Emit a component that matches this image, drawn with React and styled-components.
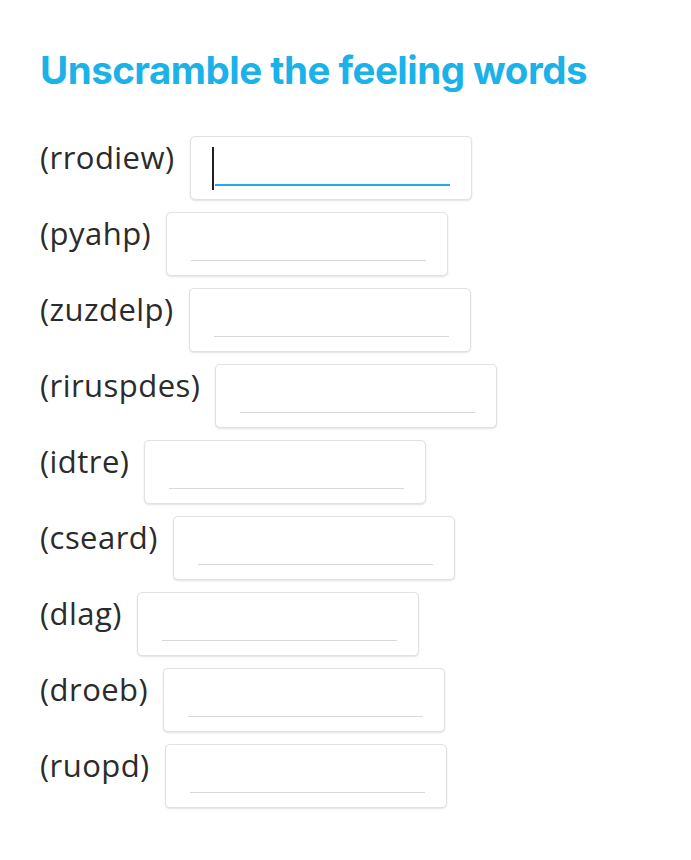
import React from 'react';
import styled, { createGlobalStyle } from 'styled-components';

const GlobalStyle = createGlobalStyle`
  body {
    margin: 0;
    background: #fff;
    font-family: "Open Sans", "Liberation Sans", sans-serif;
  }
`;

const Page = styled.div`
  width: 691px;
  height: 860px;
  padding: 44px 0 0 40px;
  box-sizing: border-box;
`;

const Title = styled.h1`
  margin: 0 0 40px;
  font-family: Inter, "Open Sans", sans-serif;
  font-weight: 700;
  font-size: 38.5px;
  letter-spacing: -0.5px;
  line-height: 52px;
  color: #1bb1e9;
`;

const List = styled.div`
  display: flex;
  flex-direction: column;
  gap: 12px;
`;

const Row = styled.div`
  display: flex;
  align-items: flex-start;
  gap: 15px;
`;

const Label = styled.span`
  font-family: "Open Sans", sans-serif;
  font-size: 31px;
  letter-spacing: 0.45px;
  line-height: 42px;
  color: #2b2b2b;
`;

const Box = styled.div`
  position: relative;
  width: 282px;
  height: 64px;
  box-sizing: border-box;
  border: 1px solid #e2e2dc;
  border-radius: 5px;
  background: #fff;
  box-shadow: 0 1px 2px rgba(0, 0, 0, 0.12);
`;

const Line = styled.div`
  position: absolute;
  left: 24px;
  right: 21px;
  top: 47px;
  height: ${p => (p.$active ? '2px' : '1px')};
  background: ${p => (p.$active ? '#1eaee4' : '#d8d8d4')};
`;

const Caret = styled.div`
  position: absolute;
  left: 21px;
  top: 10px;
  width: 2px;
  height: 43px;
  background: #222;
`;

const words = ['rrodiew', 'pyahp', 'zuzdelp', 'riruspdes', 'idtre', 'cseard', 'dlag', 'droeb', 'ruopd'];

export default function App() {
  return (
    <Page>
      <GlobalStyle />
      <Title>Unscramble the feeling words</Title>
      <List>
        {words.map((w, i) => (
          <Row key={w}>
            <Label>({w})</Label>
            <Box>
              {i === 0 && <Caret />}
              <Line $active={i === 0} />
            </Box>
          </Row>
        ))}
      </List>
    </Page>
  );
}
